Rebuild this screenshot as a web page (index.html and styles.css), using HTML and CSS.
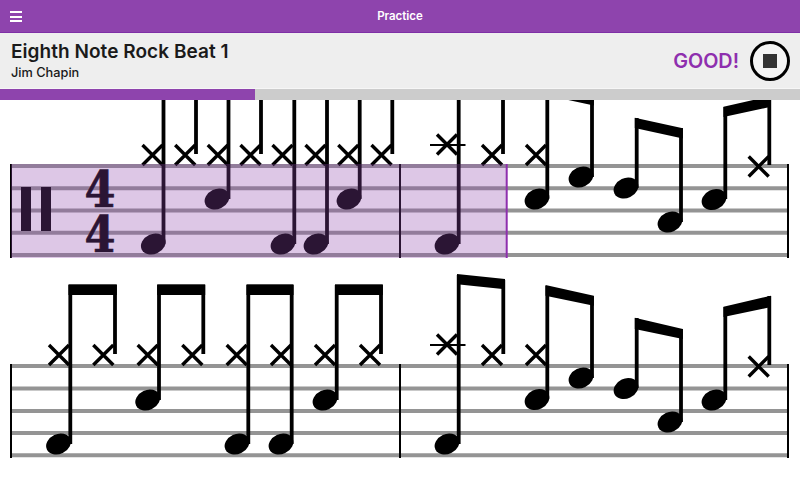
FILE: index.html
```html
<!DOCTYPE html>
<html lang="en">
<head>
  <meta charset="UTF-8" />
  <meta name="viewport" content="width=device-width, initial-scale=1.0"/>
  <title>Practice</title>
  <link rel="stylesheet" href="styles.css">
</head>
<body>
  <div class="app">
    <header class="topbar">
      <button class="menu-btn" aria-label="Menu">
        <span></span><span></span><span></span>
      </button>
      <div class="topbar-title">Practice</div>
    </header>

    <section class="song-bar">
      <div class="song-info">
        <h1>Eighth Note Rock Beat 1</h1>
        <div class="artist">Jim Chapin</div>
      </div>
      <div class="song-status">
        <span class="rating">GOOD!</span>
        <button class="stop-btn" aria-label="Stop"><span></span></button>
      </div>
    </section>

    <div class="progress"><div class="progress-fill"></div></div>

    <!-- score: viewBox keeps page coordinates, notes sit where they are on the staff -->
    <svg class="score" viewBox="0 100 800 400" width="800" height="400">
      <defs>
        <ellipse id="head" rx="12.8" ry="10" transform="rotate(-25)"/>
        <path id="hat" class="hat" d="M-10 -10L10 10M-10 10L10 -10"/>
      </defs>

      <!-- staff 1 -->
      <g class="staff-lines">
        <line x1="11" x2="788" y1="166" y2="166"/>
        <line x1="11" x2="788" y1="188.3" y2="188.3"/>
        <line x1="11" x2="788" y1="210.6" y2="210.6"/>
        <line x1="11" x2="788" y1="232.8" y2="232.8"/>
        <line x1="11" x2="788" y1="255" y2="255"/>
      </g>
      <g class="barlines">
        <line x1="11" x2="11" y1="164" y2="258"/>
        <line x1="400" x2="400" y1="164" y2="258"/>
        <line x1="788" x2="788" y1="164" y2="258"/>
      </g>
      <rect x="21" y="187" width="10" height="44"/>
      <rect x="41" y="187" width="10" height="44"/>
      <text class="time-sig" x="100" y="206.7" textLength="31" lengthAdjust="spacingAndGlyphs">4</text>
      <text class="time-sig" x="100" y="251.7" textLength="31" lengthAdjust="spacingAndGlyphs">4</text>

      <g class="stems">
        <line x1="163.5" x2="163.5" y1="100" y2="244"/>
        <line x1="196" x2="196" y1="100" y2="154"/>
        <line x1="228.5" x2="228.5" y1="100" y2="199"/>
        <line x1="261" x2="261" y1="100" y2="154"/>
        <line x1="294.3" x2="294.3" y1="100" y2="244"/>
        <line x1="327" x2="327" y1="100" y2="244"/>
        <line x1="359.7" x2="359.7" y1="100" y2="199"/>
        <line x1="392.3" x2="392.3" y1="100" y2="154"/>
        <line x1="458.7" x2="458.7" y1="100" y2="244"/>
        <line x1="503" x2="503" y1="100" y2="154"/>
        <line x1="547.3" x2="547.3" y1="100" y2="199"/>
        <line x1="592" x2="592" y1="100" y2="177"/>
        <line x1="636.7" x2="636.7" y1="118" y2="188"/>
        <line x1="681" x2="681" y1="128" y2="222"/>
        <line x1="725.3" x2="725.3" y1="107" y2="199"/>
        <line x1="769.3" x2="769.3" y1="100" y2="165"/>
      </g>
      <polygon points="545.5,84 593.8,95 593.8,105.6 545.5,95"/>
      <polygon points="634.8,117.7 682.8,128.3 682.8,138.6 634.8,128"/>
      <polygon points="723.5,106.7 771,96 771,106.7 723.5,116.9"/>

      <use href="#head" x="153.3" y="244"/>
      <use href="#head" x="217" y="199"/>
      <use href="#head" x="283" y="244"/>
      <use href="#head" x="316" y="244"/>
      <use href="#head" x="349" y="199"/>
      <use href="#head" x="447" y="244"/>
      <use href="#head" x="537" y="199"/>
      <use href="#head" x="581" y="177"/>
      <use href="#head" x="626" y="188"/>
      <use href="#head" x="670" y="222"/>
      <use href="#head" x="714" y="199.5"/>

      <use href="#hat" x="152.5" y="155"/>
      <use href="#hat" x="185.2" y="155"/>
      <use href="#hat" x="217.8" y="155"/>
      <use href="#hat" x="250.5" y="155"/>
      <use href="#hat" x="282.5" y="155"/>
      <use href="#hat" x="315.5" y="155"/>
      <use href="#hat" x="348.3" y="155"/>
      <use href="#hat" x="381.5" y="155"/>
      <use href="#hat" x="447" y="144.5"/>
      <use href="#hat" x="492" y="155"/>
      <use href="#hat" x="536" y="155"/>
      <use href="#hat" x="758.7" y="166.5"/>
      <line class="ledger" x1="430" x2="465.5" y1="145" y2="145"/>

      <!-- part already played -->
      <rect class="played" x="11" y="164" width="496" height="94"/>
      <line class="played-end" x1="506.7" x2="506.7" y1="164" y2="258"/>

      <!-- staff 2 -->
      <g class="staff-lines">
        <line x1="11" x2="788" y1="366" y2="366"/>
        <line x1="11" x2="788" y1="388.5" y2="388.5"/>
        <line x1="11" x2="788" y1="411" y2="411"/>
        <line x1="11" x2="788" y1="433" y2="433"/>
        <line x1="11" x2="788" y1="455.3" y2="455.3"/>
      </g>
      <g class="barlines">
        <line x1="11" x2="11" y1="364" y2="458"/>
        <line x1="400" x2="400" y1="364" y2="458"/>
        <line x1="788" x2="788" y1="364" y2="458"/>
      </g>

      <g class="stems">
        <line x1="70.3" x2="70.3" y1="285" y2="444"/>
        <line x1="115" x2="115" y1="285" y2="354"/>
        <line x1="159" x2="159" y1="285" y2="400"/>
        <line x1="203.3" x2="203.3" y1="285" y2="354"/>
        <line x1="248.3" x2="248.3" y1="285" y2="444"/>
        <line x1="291.7" x2="291.7" y1="285" y2="444"/>
        <line x1="336.7" x2="336.7" y1="285" y2="400"/>
        <line x1="381" x2="381" y1="285" y2="354"/>
        <line x1="458.7" x2="458.7" y1="275" y2="444"/>
        <line x1="503.3" x2="503.3" y1="280" y2="354"/>
        <line x1="547.3" x2="547.3" y1="286" y2="399"/>
        <line x1="592" x2="592" y1="296" y2="378"/>
        <line x1="636.7" x2="636.7" y1="318" y2="388"/>
        <line x1="681" x2="681" y1="329" y2="422"/>
        <line x1="725.3" x2="725.3" y1="307" y2="400"/>
        <line x1="769.3" x2="769.3" y1="296" y2="365"/>
      </g>
      <rect x="68.5" y="284.3" width="48.3" height="10.7"/>
      <rect x="157.2" y="284.3" width="48" height="10.7"/>
      <rect x="246.5" y="284.3" width="47" height="10.7"/>
      <rect x="335" y="284.3" width="47.8" height="10.7"/>
      <polygon points="457,274 505,279 505,289.2 457,284.3"/>
      <polygon points="545.5,285 593.8,295.7 593.8,305.8 545.5,295.7"/>
      <polygon points="634.8,317.7 682.8,329 682.8,339 634.8,329"/>
      <polygon points="723.5,306.7 771,295.7 771,307 723.5,316.9"/>

      <use href="#head" x="58.5" y="444"/>
      <use href="#head" x="147.7" y="400"/>
      <use href="#head" x="237" y="444"/>
      <use href="#head" x="281" y="444"/>
      <use href="#head" x="325" y="400"/>
      <use href="#head" x="447" y="444"/>
      <use href="#head" x="537" y="399.5"/>
      <use href="#head" x="581" y="378"/>
      <use href="#head" x="626" y="388.5"/>
      <use href="#head" x="670" y="422"/>
      <use href="#head" x="714" y="400"/>

      <use href="#hat" x="59" y="355"/>
      <use href="#hat" x="103.3" y="355"/>
      <use href="#hat" x="147.7" y="355"/>
      <use href="#hat" x="192.3" y="355"/>
      <use href="#hat" x="236.7" y="355"/>
      <use href="#hat" x="281" y="355"/>
      <use href="#hat" x="325" y="355"/>
      <use href="#hat" x="370" y="355"/>
      <use href="#hat" x="447" y="344.5"/>
      <use href="#hat" x="492" y="355"/>
      <use href="#hat" x="536" y="355"/>
      <use href="#hat" x="758.7" y="366.5"/>
      <line class="ledger" x1="430" x2="465.5" y1="345" y2="345"/>
    </svg>
  </div>
</body>
</html>
```

FILE: styles.css
```css
html, body {
  margin: 0;
  padding: 0;
  background: white;
}
.app {
  width: 800px;
  height: 500px;
  overflow: hidden;
  display: flex;
  flex-direction: column;
  font-family: Inter, sans-serif;
  color: #1a1a1a;
}
.topbar {
  position: relative;
  flex: 0 0 33px;
  box-sizing: border-box;
  display: flex;
  align-items: center;
  justify-content: center;
  background: #8e44ad;
  border-bottom: 1px solid #7e2fa6;
}
.topbar-title {
  color: white;
  font-size: 11.5px;
  font-weight: 600;
}
.menu-btn {
  position: absolute;
  left: 10px;
  top: 11px;
  width: 12px;
  padding: 0;
  border: none;
  background: none;
  display: flex;
  flex-direction: column;
  gap: 2.5px;
}
.menu-btn span {
  display: block;
  height: 2px;
  background: white;
}
.song-bar {
  flex: 0 0 55px;
  display: flex;
  align-items: center;
  justify-content: space-between;
  padding: 0 11px;
  background: #eeeeee;
}
.song-info h1 {
  margin: 0;
  font-size: 19px;
  line-height: 22px;
  font-weight: 600;
  letter-spacing: 0.05px;
}
.artist {
  margin-top: 1px;
  font-size: 12.75px;
  line-height: 17px;
  font-weight: 500;
}
.song-status {
  display: flex;
  align-items: center;
  gap: 11px;
}
.rating {
  color: #8e2fae;
  font-size: 19.8px;
  font-weight: 600;
}
.stop-btn {
  width: 40px;
  height: 40px;
  margin-right: -1px;
  padding: 0;
  box-sizing: border-box;
  border: 3px solid black;
  border-radius: 50%;
  background: #f4f4f4;
  display: flex;
  align-items: center;
  justify-content: center;
}
.stop-btn span {
  display: block;
  width: 14px;
  height: 14px;
  background: #333;
}
.progress {
  flex: 0 0 12px;
  box-sizing: border-box;
  border-top: 1px solid #f6f6f6;
  background: #cccccc;
}
.progress-fill {
  width: 255px;
  height: 100%;
  background: #8e44ad;
}
.score {
  display: block;
  flex: 0 0 400px;
}
.staff-lines line {
  stroke: #949494;
  stroke-width: 4;
}
.barlines line {
  stroke: black;
  stroke-width: 2;
}
.stems line {
  stroke: black;
  stroke-width: 3.8;
}
.hat {
  fill: none;
  stroke: black;
  stroke-width: 3.4;
}
.ledger {
  stroke: black;
  stroke-width: 2;
}
.time-sig {
  font-family: "DejaVu Serif", serif;
  font-size: 50px;
  font-weight: 700;
  text-anchor: middle;
  stroke: black;
  stroke-width: 0.7;
}
.played {
  fill: rgba(142, 68, 173, 0.3);
}
.played-end {
  stroke: #8e2fae;
  stroke-width: 2;
}
```
